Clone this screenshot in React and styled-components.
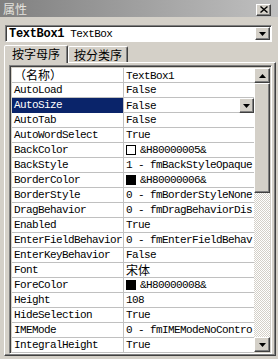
import React from "react";
import styled, { createGlobalStyle } from "styled-components";

const GlobalStyle = createGlobalStyle`
  html, body {
    margin: 0;
    padding: 0;
    background: #d4d0c8;
  }
`;

const mono = `"Liberation Mono", "Noto Sans CJK SC", monospace`;
const cjk = `"Noto Sans CJK SC", "Liberation Sans", sans-serif`;

const Window = styled.div`
  width: 278px;
  height: 359px;
  background: #d4d0c8;
  display: flex;
  flex-direction: column;
  overflow: hidden;
`;

const TitleBar = styled.div`
  height: 17px;
  flex-shrink: 0;
  background: linear-gradient(to right, #808080, #c0c0c0);
  display: flex;
  align-items: center;
  justify-content: space-between;
  padding: 0 7px 0 3px;
  color: #e4e2de;
  font-family: ${cjk};
  font-size: 12px;
  line-height: 17px;
`;

const RaisedBox = styled.div`
  box-sizing: border-box;
  background: #d4d0c8;
  border: 1px solid;
  border-color: #fff #404040 #404040 #fff;
  box-shadow: inset -1px -1px 0 #808080;
  display: flex;
  align-items: center;
  justify-content: center;
`;

const CloseBtn = styled(RaisedBox)`
  width: 15px;
  height: 12px;
  margin-top: 2px;
`;

const Combo = styled.div`
  flex-shrink: 0;
  box-sizing: border-box;
  height: 17px;
  margin: 8px 6px 0 5px;
  background: #fff;
  border: 1px solid;
  border-color: #808080 #fff #fff #808080;
  box-shadow: inset 1px 1px 0 #404040;
  display: flex;
  align-items: center;
  padding: 0 1px 0 3px;
  font-family: ${mono};
  font-size: 11px;
  color: #000;
`;

const ComboText = styled.div`
  flex: 1;
  white-space: pre;
  letter-spacing: -0.6px;
`;

const Strong = styled.b`
  font-size: 12px;
  letter-spacing: -0.3px;
`;

const ArrowBtn = styled(RaisedBox)`
  width: ${({ w }) => w || 15}px;
  height: ${({ h }) => h || 13}px;
  flex-shrink: 0;
`;

const TabStrip = styled.div`
  flex-shrink: 0;
  height: 17px;
  margin-top: 3px;
  padding-left: 4px;
  display: flex;
  align-items: flex-end;
`;

const Tab = styled.div`
  position: relative;
  z-index: ${({ active }) => (active ? 2 : 0)};
  box-sizing: border-box;
  height: ${({ active }) => (active ? 18 : 16)}px;
  margin-bottom: ${({ active }) => (active ? -1 : 0)}px;
  padding: 0 ${({ active }) => (active ? 7 : 5)}px;
  border: 1px solid;
  border-bottom: none;
  border-color: #fff #404040 transparent #fff;
  box-shadow: inset -1px 0 0 #808080;
  border-radius: 2px 2px 0 0;
  background: #d4d0c8;
  font-family: ${cjk};
  font-size: 12px;
  line-height: ${({ active }) => (active ? 16 : 15)}px;
  color: #000;
`;

const Panel = styled.div`
  flex: 1;
  min-height: 0;
  margin: 0 2px 3px 4px;
  border: 1px solid;
  border-color: #fff #404040 #404040 #fff;
  box-shadow: inset -1px -1px 0 #808080;
  padding: 2px 3px 1px 4px;
  display: flex;
  flex-direction: column;
`;

const Grid = styled.div`
  flex: 1;
  min-height: 0;
  border: 1px solid;
  border-color: #808080 #fff #fff #808080;
  box-shadow: inset 1px 1px 0 #404040, inset -1px -1px 0 #d4d0c8;
  padding: 2px 1px 1px 2px;
  display: flex;
  overflow: hidden;
`;

const Table = styled.div`
  flex: 1;
  min-width: 0;
  background: #fff;
  display: flex;
  flex-direction: column;
`;

const Row = styled.div`
  display: grid;
  grid-template-columns: 112px 1fr;
  height: 15px;
  box-sizing: border-box;
  border-bottom: 1px solid #c0c0c0;
  font-family: ${mono};
  font-size: 11px;
  letter-spacing: -0.6px;
  line-height: 14px;
  color: #000;
`;

const NameCell = styled.div`
  padding-left: 2px;
  border-right: 1px solid #c0c0c0;
  white-space: pre;
  background: ${({ selected }) => (selected ? "#0a246a" : "transparent")};
  color: ${({ selected }) => (selected ? "#fff" : "#000")};
`;

const ValueCell = styled.div`
  padding-left: 2px;
  white-space: pre;
  display: flex;
  align-items: center;
  min-width: 0;
`;

const ValueText = styled.span`
  flex: 1;
`;

const Cjk = styled.span`
  font-family: ${cjk};
  font-size: 12px;
  line-height: 14px;
  letter-spacing: 0;
`;

const Swatch = styled.span`
  box-sizing: border-box;
  width: 10px;
  height: 10px;
  flex-shrink: 0;
  margin-right: 4px;
  border: 1px solid #000;
  background: ${({ color }) => color};
`;

const Scrollbar = styled.div`
  width: 16px;
  flex-shrink: 0;
  display: flex;
  flex-direction: column;
`;

const Track = styled.div`
  flex: 1;
  background-color: #fff;
  background-image: repeating-conic-gradient(#d4d0c8 0 25%, #fff 0 50%);
  background-size: 2px 2px;
`;

const Thumb = styled(RaisedBox)`
  height: 110px;
  flex-shrink: 0;
`;

const Arrow = ({ up }) => (
  <svg width="7" height="4" viewBox="0 0 7 4">
    <path d={up ? "M3.5 0L7 4H0z" : "M0 0h7L3.5 4z"} fill="#000" />
  </svg>
);

// values are shown as far as the column lets them be seen
const rows = [
  { name: <Cjk>（名称）</Cjk>, value: "TextBox1" },
  { name: "AutoLoad", value: "False" },
  { name: "AutoSize", value: "False", selected: true },
  { name: "AutoTab", value: "False" },
  { name: "AutoWordSelect", value: "True" },
  { name: "BackColor", value: "&H80000005&", swatch: "#fff" },
  { name: "BackStyle", value: "1 - fmBackStyleOpaque" },
  { name: "BorderColor", value: "&H80000006&", swatch: "#000" },
  { name: "BorderStyle", value: "0 - fmBorderStyleNone" },
  { name: "DragBehavior", value: "0 - fmDragBehaviorDis" },
  { name: "Enabled", value: "True" },
  { name: "EnterFieldBehavior", value: "0 - fmEnterFieldBehav" },
  { name: "EnterKeyBehavior", value: "False" },
  { name: "Font", value: <Cjk>宋体</Cjk> },
  { name: "ForeColor", value: "&H80000008&", swatch: "#000" },
  { name: "Height", value: "108" },
  { name: "HideSelection", value: "True" },
  { name: "IMEMode", value: "0 - fmIMEModeNoContro" },
  { name: "IntegralHeight", value: "True" },
];

const App = () => {
  return (
    <Window>
      <GlobalStyle />
      <TitleBar>
        <span>属性</span>
        <CloseBtn>
          <svg width="8" height="7" viewBox="0 0 8 7">
            <path d="M0.5 0.5L7.5 6.5M7.5 0.5L0.5 6.5" stroke="#000" strokeWidth="1.4" />
          </svg>
        </CloseBtn>
      </TitleBar>

      <Combo>
        <ComboText>
          <Strong>TextBox1</Strong> TextBox
        </ComboText>
        <ArrowBtn>
          <Arrow />
        </ArrowBtn>
      </Combo>

      <TabStrip>
        <Tab active>按字母序</Tab>
        <Tab>按分类序</Tab>
      </TabStrip>

      <Panel>
        <Grid>
          <Table>
            {rows.map((row, i) => (
              <Row key={i}>
                <NameCell selected={row.selected}>{row.name}</NameCell>
                <ValueCell>
                  {row.swatch && <Swatch color={row.swatch} />}
                  <ValueText>{row.value}</ValueText>
                  {row.selected && (
                    <ArrowBtn w={15} h={15}>
                      <Arrow />
                    </ArrowBtn>
                  )}
                </ValueCell>
              </Row>
            ))}
          </Table>
          <Scrollbar>
            <ArrowBtn w={16} h={15}>
              <Arrow up />
            </ArrowBtn>
            <Thumb />
            <Track />
            <ArrowBtn w={16} h={15}>
              <Arrow />
            </ArrowBtn>
          </Scrollbar>
        </Grid>
      </Panel>
    </Window>
  );
};

export default App;
